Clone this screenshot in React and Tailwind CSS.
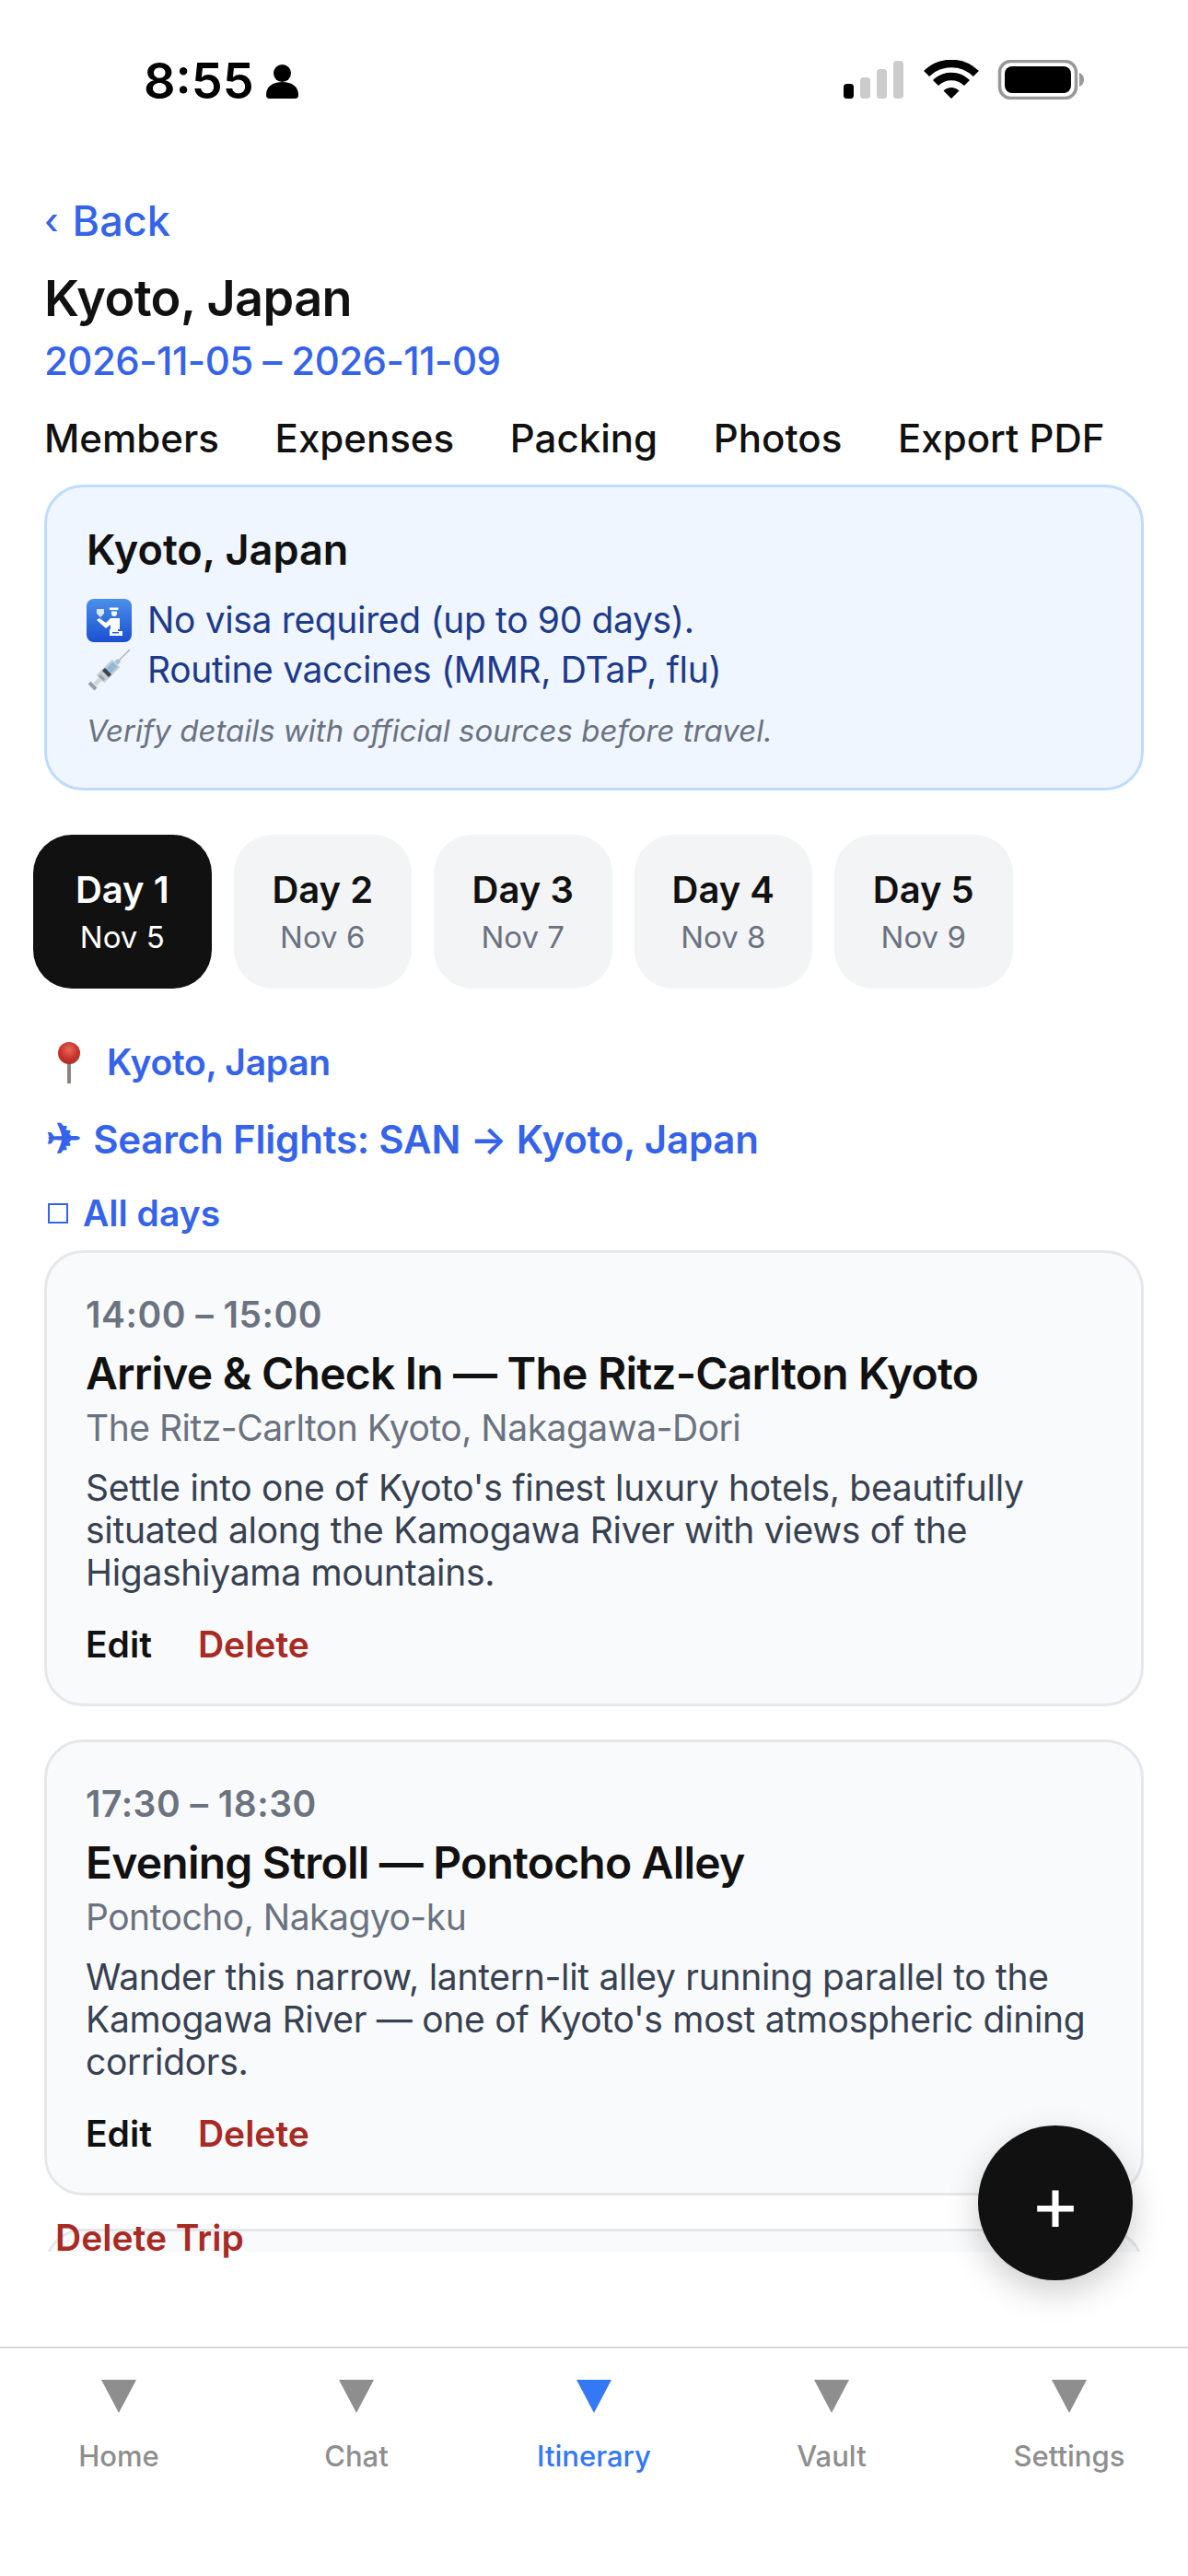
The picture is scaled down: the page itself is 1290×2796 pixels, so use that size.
import React from "react";

const days = [
  { label: "Day 1", date: "Nov 5", active: true },
  { label: "Day 2", date: "Nov 6" },
  { label: "Day 3", date: "Nov 7" },
  { label: "Day 4", date: "Nov 8" },
  { label: "Day 5", date: "Nov 9" },
];

const tabs = [
  { label: "Home" },
  { label: "Chat" },
  { label: "Itinerary", active: true },
  { label: "Vault" },
  { label: "Settings" },
];

const activities = [
  {
    time: "14:00 – 15:00",
    title: "Arrive & Check In — The Ritz-Carlton Kyoto",
    place: "The Ritz-Carlton Kyoto, Nakagawa-Dori",
    lines: [
      "Settle into one of Kyoto's finest luxury hotels, beautifully",
      "situated along the Kamogawa River with views of the",
      "Higashiyama mountains.",
    ],
  },
  {
    time: "17:30 – 18:30",
    title: "Evening Stroll — Pontocho Alley",
    place: "Pontocho, Nakagyo-ku",
    lines: [
      "Wander this narrow, lantern-lit alley running parallel to the",
      "Kamogawa River — one of Kyoto's most atmospheric dining",
      "corridors.",
    ],
  },
];

const PersonIcon = () => (
  <svg width="35" height="37" viewBox="0 0 35 37" fill="#000">
    <circle cx="17.5" cy="9.5" r="9.5" />
    <path d="M0 33c0-9 7-14 17.5-14S35 24 35 33c0 3-1.5 4-4 4H4c-2.5 0-4-1-4-4z" />
  </svg>
);

const StatusIcons = () => (
  <svg width="261" height="43" viewBox="0 0 261 43">
    <rect x="0" y="26" width="11" height="16" rx="3.5" fill="#000" />
    <rect x="18" y="19" width="11" height="23" rx="3.5" fill="#ccc" />
    <rect x="36" y="10" width="11" height="32" rx="3.5" fill="#ccc" />
    <rect x="54" y="1" width="11" height="41" rx="3.5" fill="#ccc" />
    <g transform="translate(87 0)">
      <path d="M3.1 15.1A38 38 0 0 1 56.9 15.1" fill="none" stroke="#000" strokeWidth="8.5" />
      <path d="M13 25A24 24 0 0 1 47 25" fill="none" stroke="#000" strokeWidth="8.5" />
      <path d="M30 42L21.5 33.5A12 12 0 0 1 38.5 33.5Z" fill="#000" />
    </g>
    <rect x="169.5" y="1.5" width="83" height="40" rx="12" fill="none" stroke="#999" strokeWidth="3.5" />
    <rect x="175" y="7" width="72" height="29" rx="8" fill="#000" />
    <path d="M256 14c3 1 5 4 5 7.500s-2 6.500-5 7.500z" fill="#999" />
  </svg>
);

const PassportIcon = () => (
  <svg width="49" height="47" viewBox="0 0 49 47">
    <defs>
      <linearGradient id="passportBlue" x1="0" y1="0" x2="0" y2="1">
        <stop offset="0" stopColor="#4a90ea" />
        <stop offset="1" stopColor="#1b4fd2" />
      </linearGradient>
    </defs>
    <rect width="49" height="47" rx="8" fill="url(#passportBlue)" />
    {/* booklet */}
    <path d="M11 11h8v5l-4 4-4-4z" fill="#dbe8fb" />
    {/* cap and head */}
    <path d="M25 9.500h9.500v2.500H25z" fill="#fff" />
    <path d="M27 13.500h6v2c0 2-1.200 3.500-3 3.500s-3-1.500-3-3.500z" fill="#fff" />
    {/* arm and body */}
    <path d="M11 23l3-2 7 5 5-5h10v12H26v-5l-5 4z" fill="#fff" />
    {/* desk */}
    <path d="M25 33h9v2h5v5H25z" fill="#fff" />
    <path d="M28 36h7v1.500h-7z" fill="#2a62dc" />
  </svg>
);

const SyringeIcon = () => (
  <svg width="48" height="47" viewBox="0 0 48 47" fill="none">
    <path d="M47 1L33 15" stroke="#a8adb3" strokeWidth="1.200" />
    <path d="M35.500 12.500L32 16" stroke="#b8bec4" strokeWidth="5" />
    <path d="M32 16L15 33" stroke="#c4ced6" strokeWidth="12" />
    <path d="M31 17L23 25" stroke="#8fb9d6" strokeWidth="7" />
    <path d="M23.500 24.500L20.500 27.500" stroke="#3c4248" strokeWidth="10" />
    <path d="M15 33L9 39" stroke="#d3d6d9" strokeWidth="5" />
    <path d="M14 29L19 34" stroke="#9aa0a5" strokeWidth="3" />
    <path d="M3 37L10 44" stroke="#9a9ea3" strokeWidth="4" />
  </svg>
);

const PinIcon = () => (
  <svg width="24" height="45" viewBox="0 0 24 45">
    <defs>
      <radialGradient id="pinRed" cx="0.5" cy="0.35" r="0.65">
        <stop offset="0" stopColor="#e8685a" />
        <stop offset="0.6" stopColor="#c9352c" />
        <stop offset="1" stopColor="#a92c26" />
      </radialGradient>
    </defs>
    <rect x="10" y="22" width="4" height="23" fill="#8b8680" />
    <circle cx="12" cy="12" r="12" fill="url(#pinRed)" />
  </svg>
);

const TabTriangle = ({ active }) => (
  <svg width="38" height="36" viewBox="0 0 38 36">
    <path d="M0 0H38L19 36Z" fill={active ? "#3478f6" : "#8e8e8e"} />
  </svg>
);

const ActivityCard = ({ item }) => (
  <div className="rounded-[42px] border-[3px] border-[#e5e7eb] bg-[#f9fafb] px-[42px] pt-[43px] pb-[37px]">
    <p className="text-[39px] leading-[48px] font-semibold tracking-[0.5px] text-[#6b7280]">{item.time}</p>
    <h2 className="mt-[10px] text-[48px] leading-[60px] font-semibold tracking-[-0.8px] text-[#111111]">{item.title}</h2>
    <p className="mt-[5px] text-[39px] leading-[48px] tracking-[-0.5px] text-[#6b7280]">{item.place}</p>
    <p className="mt-[18px] text-[39px] leading-[46px] tracking-[-0.3px] text-[#374151]">
      {item.lines.map((line) => (
        <span key={line} className="block whitespace-nowrap">{line}</span>
      ))}
    </p>
    <div className="mt-[28px] flex gap-[50px] text-[39px] leading-[54px] font-semibold">
      <span className="text-[#111111]">Edit</span>
      <span className="text-[#a82a24]">Delete</span>
    </div>
  </div>
);

export default function App() {
  return (
    <div className="relative flex h-[2796px] w-[1290px] flex-col overflow-hidden bg-white font-['Inter',sans-serif]">
      {/* status bar */}
      <div className="flex h-[213px] shrink-0 items-start justify-between pr-[113px] pl-[156px]">
        <div className="mt-[56px] flex items-center gap-[13px]">
          <span className="text-[54px] leading-[64px] font-semibold text-black">8:55</span>
          <PersonIcon />
        </div>
        <div className="mt-[65px]">
          <StatusIcons />
        </div>
      </div>

      <main className="h-[2231px] shrink-0 overflow-hidden px-[48px]">
        <div className="flex h-[54px] items-center gap-[15px] text-[45px] leading-[54px] font-medium text-[#3563e9]">
          <span className="text-[39px]">‹</span>
          <span>Back</span>
        </div>
        <h1 className="mt-[24px] text-[54px] leading-[66px] font-semibold tracking-[-0.6px] text-[#111111]">Kyoto, Japan</h1>
        <p className="mt-[10px] text-[42px] leading-[50px] font-medium tracking-[-0.55px] text-[#3563e9]">2026-11-05 – 2026-11-09</p>

        <div className="mt-[32px] flex gap-[60.75px] text-[42px] leading-[54px] font-medium whitespace-nowrap text-[#111111]">
          <span>Members</span>
          <span>Expenses</span>
          <span>Packing</span>
          <span>Photos</span>
          <span>Export PDF</span>
        </div>

        <section className="mt-[23px] rounded-[42px] border-[3px] border-[#bfdbfe] bg-[#eff6ff] px-[43px] pt-[41px] pb-[39px]">
          <h2 className="text-[45px] leading-[54px] font-semibold text-[#111111]">Kyoto, Japan</h2>
          <div className="mt-[22px] text-[39px] leading-[54px] tracking-[-0.35px] text-[#1e3a8a]">
            <div className="flex items-center gap-[17px]">
              <PassportIcon />
              <span>No visa required (up to 90 days).</span>
            </div>
            <div className="flex items-center gap-[18px]">
              <SyringeIcon />
              <span>Routine vaccines (MMR, DTaP, flu)</span>
            </div>
          </div>
          <p className="mt-[16px] text-[33px] leading-[46px] text-[#6b7280] italic">
            Verify details with official sources before travel.
          </p>
        </section>

        <div className="-mx-[12px] mt-[48px] flex gap-[24px]">
          {days.map((day) => (
            <div
              key={day.label}
              className={
                day.active
                  ? "flex h-[167px] w-[193.5px] flex-col items-center rounded-[42px] bg-[#111111] pt-[33px]"
                  : "flex h-[167px] w-[193.5px] flex-col items-center rounded-[42px] bg-[#f3f4f6] pt-[33px]"
              }
            >
              <span className={day.active ? "text-[40px] leading-[54px] font-semibold text-white" : "text-[40px] leading-[54px] font-semibold text-[#111111]"}>
                {day.label}
              </span>
              <span className={day.active ? "mt-[2px] text-[33px] leading-[44px] text-white" : "mt-[2px] text-[33px] leading-[44px] text-[#6b7280]"}>
                {day.date}
              </span>
            </div>
          ))}
        </div>

        <div className="mt-[53px] ml-[15px] flex items-center gap-[29px] text-[39px] leading-[54px] font-semibold tracking-[-0.3px] text-[#3563e9]">
          <PinIcon />
          <span>Kyoto, Japan</span>
        </div>
        <p className="mt-[30px] text-[42px] leading-[54px] font-semibold tracking-[-0.2px] whitespace-nowrap text-[#3563e9]">
          <span className="mr-[2px] ml-[2px] text-[46px] leading-none">✈</span> Search Flights: SAN → Kyoto, Japan
        </p>
        <div className="mt-[26px] flex items-center gap-[16px] text-[39px] leading-[54px] font-semibold text-[#3563e9]">
          <span className="ml-[4px] h-[22px] w-[22px] border-[2px] border-[#3563e9]" />
          <span>All days</span>
        </div>

        <div className="mt-[13px] flex flex-col gap-[36px]">
          {activities.map((item) => (
            <ActivityCard key={item.title} item={item} />
          ))}
          <div className="h-[300px] rounded-[42px] border-[3px] border-[#e5e7eb] bg-[#f9fafb]" />
        </div>
      </main>

      <span className="absolute top-[2402px] left-[60px] text-[39px] leading-[54px] font-semibold text-[#a82a24]">Delete Trip</span>

      <button className="absolute top-[2307px] left-[1062px] flex h-[168px] w-[168px] items-center justify-center rounded-full bg-[#111111] text-[84px] leading-none font-normal text-white shadow-[0_12px_36px_rgba(0,0,0,0.2)]">
        +
      </button>

      {/* tab bar */}
      <nav className="mt-[103px] flex h-[249px] shrink-0 border-t-[2px] border-[#d9d9d9] bg-white">
        {tabs.map((tab) => (
          <div key={tab.label} className="flex w-[258px] flex-col items-center pt-[34px]">
            <TabTriangle active={tab.active} />
            <span className={tab.active ? "mt-[27px] text-[31px] leading-[40px] font-medium text-[#3478f6]" : "mt-[27px] text-[31px] leading-[40px] font-medium text-[#8e8e8e]"}>
              {tab.label}
            </span>
          </div>
        ))}
      </nav>
    </div>
  );
}
